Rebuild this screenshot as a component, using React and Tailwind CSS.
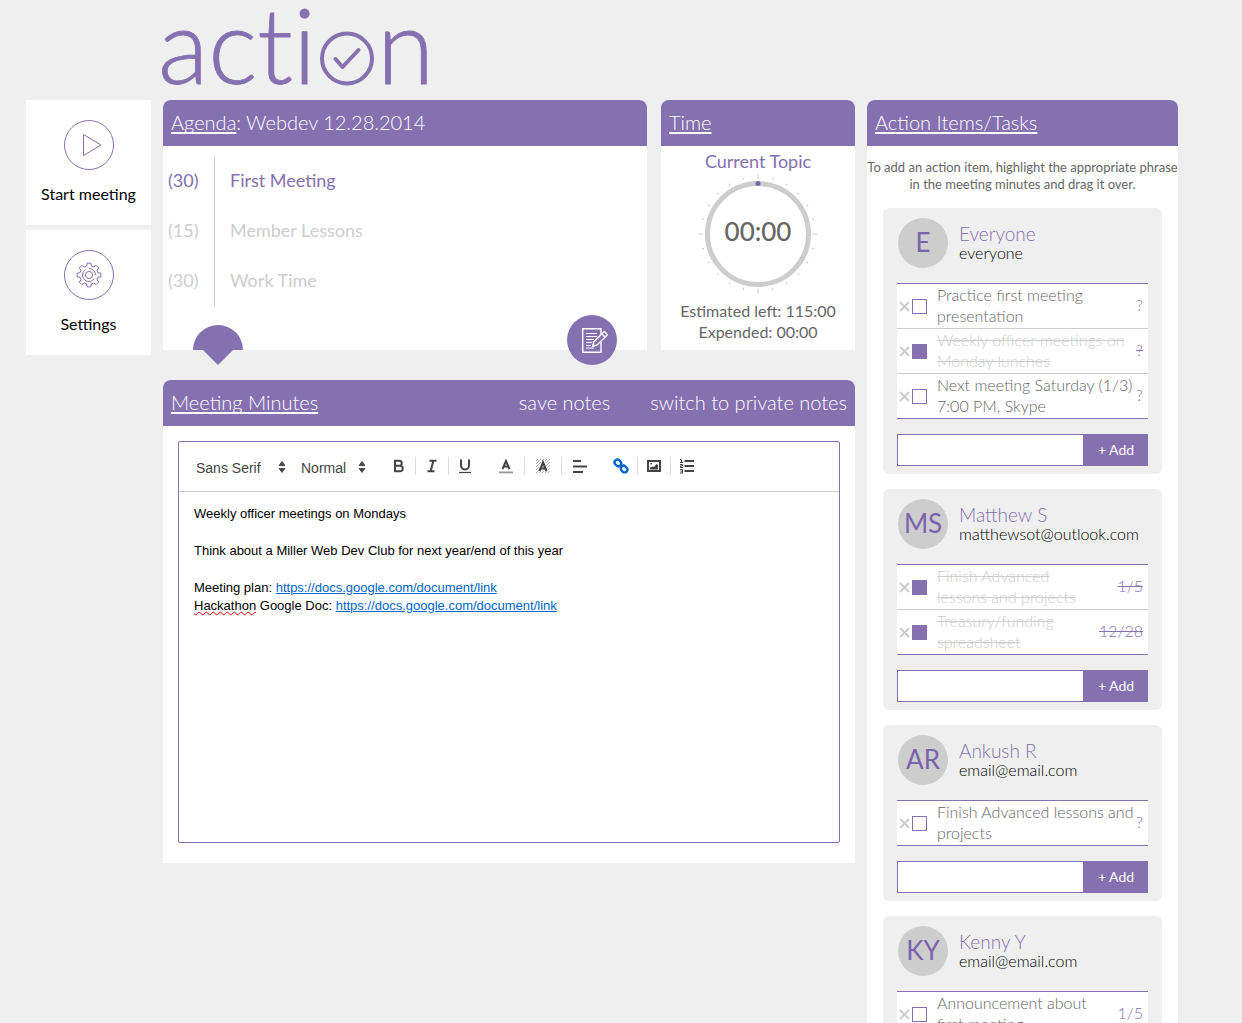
import React from "react";

const people = [
  {
    initials: "E", name: "Everyone", email: "everyone",
    tasks: [
      { text: "Practice first meeting\npresentation", due: "?" },
      { text: "Weekly officer meetings on\nMonday lunches", due: "?", done: true },
      { text: "Next meeting Saturday (1/3)\n7:00 PM, Skype", due: "?" },
    ],
  },
  {
    initials: "MS", name: "Matthew S", email: "matthewsot@outlook.com",
    tasks: [
      { text: "Finish Advanced\nlessons and projects", due: "1/5", done: true },
      { text: "Treasury/funding\nspreadsheet", due: "12/28", done: true },
    ],
  },
  {
    initials: "AR", name: "Ankush R", email: "email@email.com",
    tasks: [{ text: "Finish Advanced lessons and\nprojects", due: "?" }],
  },
  {
    initials: "KY", name: "Kenny Y", email: "email@email.com",
    tasks: [{ text: "Announcement about\nfirst meeting", due: "1/5" }],
  },
];

const agenda = [
  { minutes: 30, title: "First Meeting", active: true },
  { minutes: 15, title: "Member Lessons" },
  { minutes: 30, title: "Work Time" },
];

function Logo() {
  return (
    <svg width="270" height="100" viewBox="0 0 270 100" role="img" aria-label="action" className="block overflow-visible">
      <g fill="#8570b0" stroke="#8570b0" strokeWidth="0.8" fontFamily="Lato" fontWeight="300" fontSize="104" className="[font-variant-ligatures:none]">
        <text x="-5" y="84">acti</text>
        <text x="214" y="84">n</text>
      </g>
      <g fill="none" stroke="#8570b0" strokeLinecap="round" strokeLinejoin="round">
        <circle cx="184" cy="58.500" r="25" strokeWidth="4" />
        <path d="M172.500 59l7 8L195.500 50" strokeWidth="4" />
      </g>
    </svg>
  );
}

function PlayIcon() {
  return (
    <svg width="50" height="50" viewBox="0 0 50 50" fill="none" stroke="#8570b0" strokeWidth="1">
      <circle cx="25" cy="25" r="24.500" />
      <path d="M19.500 14.500v21l17.500-10.500z" strokeLinejoin="round" />
    </svg>
  );
}

function gearPath() {
  const pts = [];
  for (let i = 0; i < 8; i++) {
    const c = (i * Math.PI) / 4;
    [[-0.24, 9.3], [-0.16, 12], [0.16, 12], [0.24, 9.3]].forEach(([d, r]) => {
      pts.push(`${(25 + r * Math.sin(c + d)).toFixed(2)} ${(25 - r * Math.cos(c + d)).toFixed(2)}`);
    });
  }
  return "M" + pts.join("L") + "Z";
}

function GearIcon() {
  return (
    <svg width="50" height="50" viewBox="0 0 50 50" fill="none" stroke="#8570b0" strokeWidth="1">
      <circle cx="25" cy="25" r="24.500" />
      <path d={gearPath()} strokeLinejoin="round" />
      <path d="M25 18.500a6.500 6.500 0 0 1 6.500 6.500M30 29.200A6.500 6.500 0 0 1 18.500 25A6.500 6.500 0 0 1 21.500 19.500" />
      <circle cx="25" cy="25" r="3.600" />
    </svg>
  );
}

function NotesIcon() {
  return (
    <svg width="50" height="50" viewBox="0 0 50 50" fill="none" stroke="#fff" className="block">
      <circle cx="25" cy="25" r="25" fill="#8570b0" stroke="none" />
      <path d="M34 19v-5.300H15.700v23.600H34V27" strokeWidth="1.400" />
      <path d="M19 18.500h11M19 21.500h11M19 24.500h8M19 27.500h6M19 30.500h5M19 33h8" strokeWidth="1.200" />
      <path d="M25.500 31.500l1.300-4.800L37.300 16.600l3.200 3.100L30 30z M35 18.900l3 3" fill="#8570b0" strokeWidth="1.400" strokeLinejoin="round" />
    </svg>
  );
}

function Timer() {
  const ticks = Array.from({ length: 24 }, (_, i) => i);
  return (
    <svg width="120" height="120" viewBox="0 0 120 120" className="block">
      {ticks.map((i) => (
        <line
          key={i} x1="60" x2="60" y1={i % 6 === 0 ? 0.5 : 2} y2={i % 6 === 0 ? 5 : 4}
          stroke={i % 6 === 0 ? "#cdcdcd" : "#c4c4c4"} strokeWidth="1" transform={`rotate(${i * 15} 60 60)`}
        />
      ))}
      <circle cx="60" cy="60" r="50.500" fill="none" stroke="#cdcdcd" strokeWidth="5" />
      <circle cx="60" cy="9.500" r="2.500" fill="#7a62ac" />
      <text x="60" y="67" textAnchor="middle" fontFamily="Lato" fontSize="26" fontWeight="500" fill="#666">00:00</text>
    </svg>
  );
}

function SideButton({ label, children }) {
  return (
    <button type="button" className="flex h-[125px] w-full flex-col items-center bg-white pt-5">
      {children}
      <span className="mt-3 text-base leading-6 text-black">{label}</span>
    </button>
  );
}

function PanelHeader({ children }) {
  return (
    <div className="flex h-[46px] items-center rounded-t-lg bg-[#8570b0] px-2 pb-0.5 text-xl font-light text-white">
      {children}
    </div>
  );
}

function Title({ children }) {
  return <span className="underline decoration-2 underline-offset-2 [text-decoration-skip-ink:none]">{children}</span>;
}

function Picker({ label, options, width }) {
  return (
    <span className={`flex items-center ${width}`}>
      <select aria-label={label} className="min-w-0 flex-1 appearance-none bg-transparent pt-0.5 font-[Liberation_Sans,sans-serif] text-sm text-[#444] outline-none">
        {options.map((o) => <option key={o}>{o}</option>)}
      </select>
      <svg width="8" height="12" viewBox="0 0 8 12" fill="#444"><path d="M1 4.500L4 .5l3 4zM1 7.500h6l-3 4z" stroke="#444" strokeWidth=".8" strokeLinejoin="round" /></svg>
    </span>
  );
}

const toolIcons = {
  Bold: <path d="M5 3.700h4.300a2.500 2.500 0 0 1 0 5H5zM5 8.700h5a2.800 2.800 0 0 1 0 5.600H5z" fill="none" stroke="#444" strokeWidth="2" />,
  Italic: <path d="M6.500 3.700h7M4.500 14.300h7M10.300 3.700L7.700 14.300" fill="none" stroke="#444" strokeWidth="2" />,
  Underline: <><path d="M5 2.500v6a4 4 0 0 0 8 0v-6" fill="none" stroke="#444" strokeWidth="2" /><path d="M3 15.500h12" stroke="#444" strokeWidth="1.200" /></>,
  "Text colour": <><path d="M5.500 12L9 4l3.500 8M6.800 9.600h4.400" fill="none" stroke="#444" strokeWidth="2" /><path d="M2 14.500h14v1.800H2z" fill="#999" /></>,
  "Highlight colour": <><path d="M2 4l2-2M2 7l5-5M2 10l5-5M2 13l3-3M2 16l3-3M8 4l2-2M11 4l2-2M12 6l4-4M12 9l4-4M13 11l3-3M14 13l2-2M14 16l2-2M5 16l2-2M8 16l2-2M11 16l2-2" stroke="#999" strokeWidth=".8" /><path d="M5.500 14L9 5.500l3.500 8.500M6.800 11.500h4.400" fill="none" stroke="#444" strokeWidth="2.200" /></>,
  Align: <path d="M2 4h8M2 9.500h14M2 15h10" stroke="#444" strokeWidth="2" />,
  Link: <g fill="none" stroke="#06c" strokeWidth="2.400"><rect x="2.400" y="3.200" width="7" height="5.600" rx="2.800" transform="rotate(45 6 6)" /><rect x="8.600" y="9.200" width="7" height="5.600" rx="2.800" transform="rotate(45 12 12)" /></g>,
  Image: <><rect x="3" y="4" width="12" height="10" fill="none" stroke="#444" strokeWidth="2" /><path d="M5 12.500v-2l2.500-1 1.500.5L11.500 7l1.500 1v4.500zM5.500 6h1.500v1.500H5.500z" fill="#444" /></>,
  "Numbered list": <><path d="M6.500 4h9.500M6.500 9h9.500M6.500 14h9.500" stroke="#444" strokeWidth="2" /><path d="M2 2.500h1.500v3M2 5.500h3M2 7.500h2.500V9H2.500v1.500H5M2 12.500h2.500v3.500H2M2.500 14.200h2" fill="none" stroke="#444" strokeWidth="1" /></>,
};

function Tool({ name }) {
  return (
    <button type="button" aria-label={name} className="flex h-[18px] w-[18px] items-center justify-center">
      <svg width="18" height="18" viewBox="0 0 18 18">{toolIcons[name]}</svg>
    </button>
  );
}

function ToolGroup({ names, wide }) {
  const divided = wide ? "ml-[9px] flex border-l border-[#ddd] pl-[9px]" : "ml-[7px] flex border-l border-[#ddd] pl-[7px]";
  return (
    <div className="flex">
      {names.map((n, i) => (
        <div key={n} className={i ? divided : "flex"}><Tool name={n} /></div>
      ))}
    </div>
  );
}

function PersonCard({ person }) {
  return (
    <section className="rounded-md bg-[#efefef] px-3.5 pt-2.5 pb-2">
      <div className="flex h-[50px] items-center gap-[11px] pl-px">
        <div className="flex h-[50px] w-[50px] shrink-0 items-center justify-center rounded-full bg-[#cdcdcd] pb-0.5 text-[26px] text-[#7a62ac]">
          {person.initials}
        </div>
        <div className="min-w-0">
          <h3 className="text-[19px] leading-5 font-light text-[#8570b0]">{person.name}</h3>
          <p className="text-base leading-[18px] font-light text-black">{person.email}</p>
        </div>
      </div>
      <ul className="mt-[15px] divide-y divide-[#cdcdcd] border-y border-[#8570b0] bg-white">
        {person.tasks.map((t) => (
          <li key={t.text} className="flex h-[45px] items-center pr-[5px] text-base leading-[21px] font-light last:h-[44px]">
            <button type="button" aria-label={`Remove ${t.text}`} className="mt-px ml-0.5 h-[11px] w-[11px] shrink-0">
              <svg width="11" height="11" viewBox="0 0 11 11" stroke="#cdcdcd" strokeWidth="2" className="block"><path d="M1 1l9 9M10 1l-9 9" /></svg>
            </button>
            <input
              type="checkbox" defaultChecked={t.done} aria-label={t.text}
              className="ml-0.5 h-[15px] w-[15px] shrink-0 appearance-none border border-[#8570b0] bg-white checked:bg-[#8570b0]"
            />
            <span className={t.done ? "ml-2.5 flex-1 pb-[3px] whitespace-pre text-[#cdcdcd] line-through" : "ml-2.5 flex-1 pb-[3px] whitespace-pre text-[#666]"}>{t.text}</span>
            <span className={t.done ? "pb-[3px] text-[#8570b0] line-through" : "pb-[3px] text-[#8570b0]"}>{t.due}</span>
          </li>
        ))}
      </ul>
      <form className="mt-[15px] flex h-8" onSubmit={(e) => e.preventDefault()}>
        <input aria-label={`New task for ${person.name}`} className="min-w-0 flex-1 border border-[#8570b0] bg-white px-2 outline-none" />
        <button type="submit" className="w-16 bg-[#8570b0] text-sm text-white">+ Add</button>
      </form>
    </section>
  );
}

export default function App() {
  return (
    <div className="min-h-screen bg-[#efefef] pr-16 pl-[26px] font-[Lato,sans-serif]">
      <header className="h-[100px] pl-[137px]">
        <h1><Logo /></h1>
      </header>
      <div className="flex items-start gap-3">
        <nav className="flex w-[125px] shrink-0 flex-col gap-[5px]">
          <SideButton label="Start meeting"><PlayIcon /></SideButton>
          <SideButton label="Settings"><GearIcon /></SideButton>
        </nav>

        <main className="min-w-0 flex-1">
          <div className="flex gap-3.5">
            <section className="relative h-[250px] min-w-0 flex-1 bg-[#efefef]">
              <PanelHeader><h2><Title>Agenda</Title>: Webdev 12.28.2014</h2></PanelHeader>
              <div className="h-[204px] bg-white pt-2.5">
                <ul className="text-lg">
                  {agenda.map((a) => (
                    <li key={a.title} className={a.active ? "flex h-[50px] items-center text-[#8570b0]" : "flex h-[50px] items-center text-[#cdcdcd]"}>
                      <span className="flex h-full w-[52px] items-center border-r border-[#cdcdcd] pb-0.5 pl-[5px]">({a.minutes})</span>
                      <span className="pb-0.5 pl-[15px]">{a.title}</span>
                    </li>
                  ))}
                </ul>
              </div>
              <button type="button" aria-label="Collapse agenda" className="absolute -bottom-[15px] left-[30px]">
                <svg width="50" height="40" viewBox="0 0 50 40" fill="#8570b0" className="block"><path d="M0 25a25 25 0 0 1 50 0H40L25 40 10 25z" /></svg>
              </button>
              <button type="button" aria-label="Meeting notes" className="absolute right-[30px] -bottom-[15px]"><NotesIcon /></button>
            </section>

            <section className="flex h-[250px] w-[194px] shrink-0 flex-col bg-white text-center">
              <div className="bg-[#efefef] text-left"><PanelHeader><h2><Title>Time</Title></h2></PanelHeader></div>
              <h3 className="mt-[3px] mb-px text-lg leading-6 text-[#8570b0]">Current Topic</h3>
              <div className="flex justify-center"><Timer /></div>
              <p className="mt-1.5 text-base leading-[21px] text-[#666]">Estimated left: 115:00<br />Expended: 00:00</p>
            </section>
          </div>

          <section className="mt-[30px]">
            <PanelHeader>
              <h2 className="flex-1"><Title>Meeting Minutes</Title></h2>
              <button type="button" className="mr-10">save notes</button>
              <button type="button">switch to private notes</button>
            </PanelHeader>
            <div className="bg-white px-[15px] pt-[15px] pb-5">
              <div className="h-[402px] rounded-xs border border-[#8570b0]">
                <div className="flex h-[50px] items-center border-b border-[#ccc] pl-[17px]">
                  <Picker label="Font" options={["Sans Serif", "Serif", "Monospace"]} width="w-[90px]" />
                  <span className="w-[15px]" />
                  <Picker label="Size" options={["Normal", "Small", "Large"]} width="w-[65px]" />
                  <div className="ml-6 flex gap-[23px] pb-0.5">
                    <ToolGroup names={["Bold", "Italic", "Underline"]} />
                    <ToolGroup wide names={["Text colour", "Highlight colour", "Align"]} />
                    <ToolGroup names={["Link", "Image", "Numbered list"]} />
                  </div>
                </div>
                <div
                  contentEditable suppressContentEditableWarning spellCheck={false} role="textbox" aria-label="Meeting minutes"
                  className="flex flex-col gap-[19px] px-[15px] pt-[13px] font-[Liberation_Sans,sans-serif] text-[13px] leading-[18px] text-black outline-none"
                >
                  <p>Weekly officer meetings on Mondays</p>
                  <p>Think about a Miller Web Dev Club for next year/end of this year</p>
                  <p>
                    Meeting plan: <a href="#plan" className="text-[#06c] underline">https://docs.google.com/document/link</a><br />
                    <span className="underline decoration-red-600 decoration-wavy decoration-1">Hackathon</span> Google Doc: <a href="#hackathon" className="text-[#06c] underline">https://docs.google.com/document/link</a>
                  </p>
                </div>
              </div>
            </div>
          </section>
        </main>

        <aside className="w-[311px] shrink-0">
          <PanelHeader><h2><Title>Action Items/Tasks</Title></h2></PanelHeader>
          <div className="bg-white">
            <p className="pt-[13px] pb-[15px] text-center text-[13px] leading-[17px] text-[#666]">
              To add an action item, highlight the appropriate phrase<br />in the meeting minutes and drag it over.
            </p>
            <div className="flex flex-col gap-[15px] px-4 pb-4">
              {people.map((p) => <PersonCard key={p.name} person={p} />)}
            </div>
          </div>
        </aside>
      </div>
    </div>
  );
}
